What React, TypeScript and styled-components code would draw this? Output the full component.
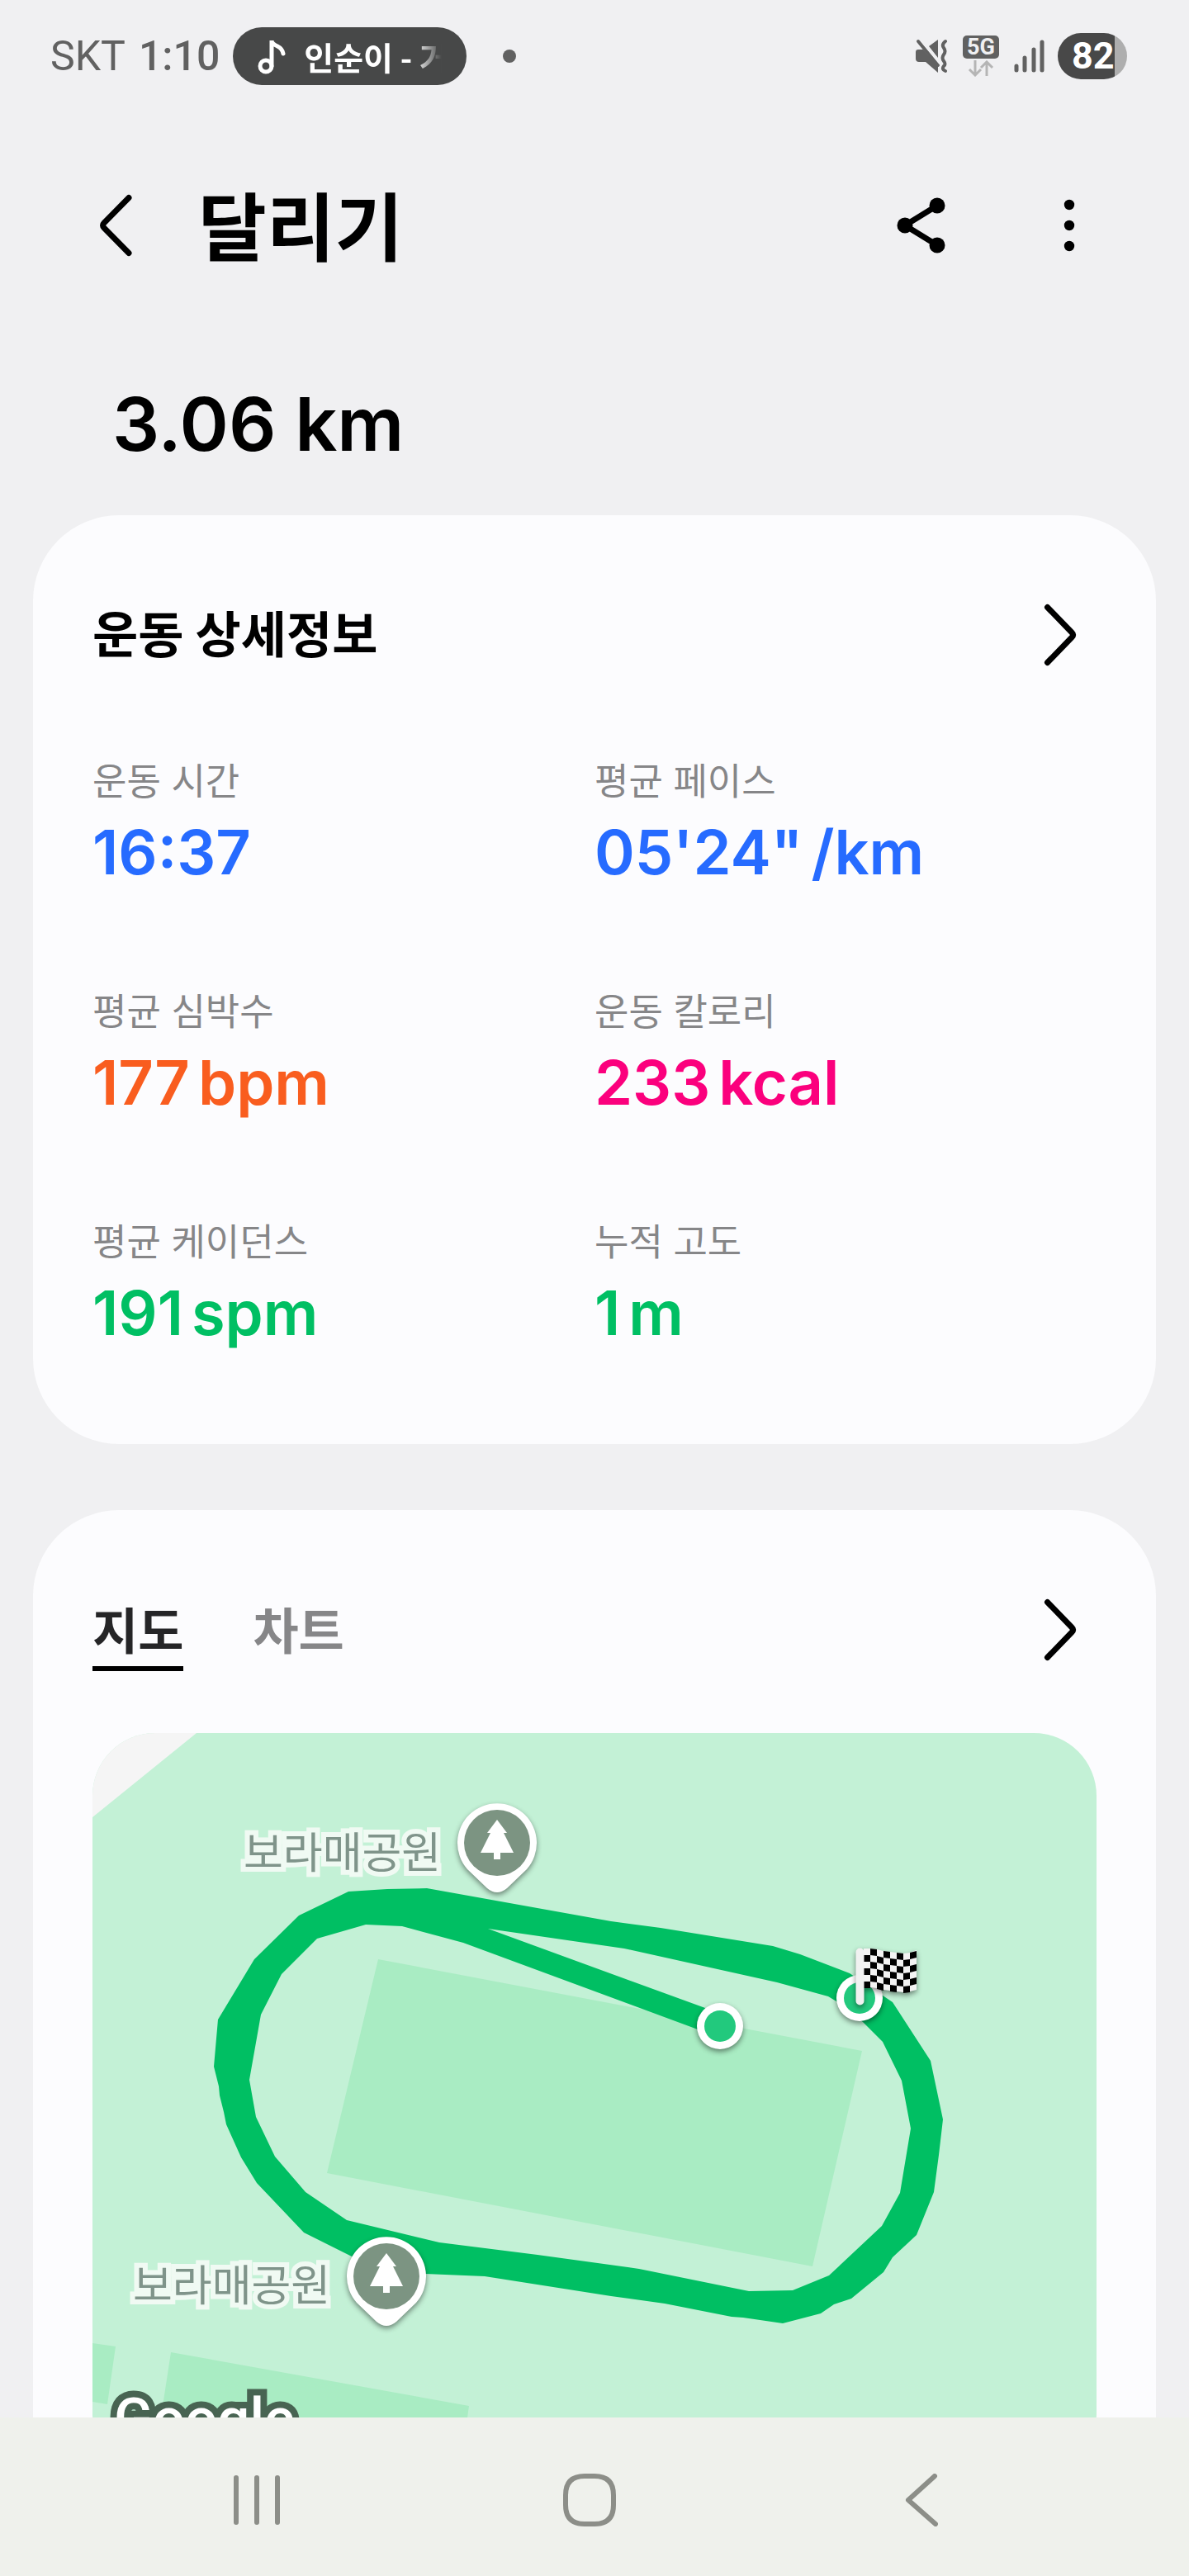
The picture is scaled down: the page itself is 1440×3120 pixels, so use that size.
import React, { useState } from 'react'
import styled, { createGlobalStyle } from 'styled-components'

const GlobalStyle = createGlobalStyle`
  * {
    box-sizing: border-box;
  }

  body {
    margin: 0;
    background: #f0f0f2;
    color: #000;
    font-family: Inter, 'Noto Sans CJK KR', sans-serif;
  }

  button {
    padding: 0;
    border: 0;
    background: none;
    color: inherit;
    font: inherit;
    cursor: pointer;
  }

  h1,
  h2,
  p,
  dl,
  dd {
    margin: 0;
  }

  svg {
    display: block;
  }
`

const Screen = styled.div`
  display: flex;
  flex-direction: column;
  height: 100vh;
`

const StatusBar = styled.div`
  display: flex;
  flex: none;
  align-items: center;
  justify-content: space-between;
  height: 136px;
  padding: 0 75px 0 61px;
  color: #616161;
  font-family: Roboto, 'Noto Sans CJK KR', sans-serif;
`

const StatusGroup = styled.div<{ $gap: number }>`
  display: flex;
  align-items: center;
  gap: ${(props) => props.$gap}px;
`

const StatusText = styled.span<{ $weight: number }>`
  font-size: 50px;
  font-weight: ${(props) => props.$weight};
  line-height: 60px;
`

const MusicChip = styled.div`
  display: flex;
  align-items: center;
  gap: 22px;
  width: 283px;
  height: 70px;
  padding: 0 30px;
  border-radius: 35px;
  background: #474848;
  color: #fff;
`

const MusicTitle = styled.span`
  flex: 1;
  overflow: hidden;
  font-family: 'Noto Sans CJK KR', sans-serif;
  font-size: 39px;
  font-weight: 700;
  line-height: 60px;
  white-space: nowrap;
  mask-image: linear-gradient(to right, #000 80%, transparent);
`

const Dot = styled.span`
  width: 16px;
  height: 16px;
  margin-left: 28px;
  border-radius: 50%;
  background: #616161;
`

const Network = styled.div`
  display: flex;
  flex-direction: column;
  align-items: center;
  gap: 2px;
`

const NetworkBadge = styled.span`
  padding: 0 5px;
  border-radius: 5px;
  background: #616161;
  color: #f0f0f2;
  font-size: 27px;
  font-weight: 700;
  line-height: 28px;
`

const Battery = styled.span`
  width: 84px;
  height: 56px;
  padding-left: 17px;
  border-radius: 28px;
  background: linear-gradient(to right, #484848 82%, #aeaeae 82%);
  color: #fff;
  font-size: 45px;
  font-weight: 700;
  line-height: 56px;
`

const AppBar = styled.header`
  display: flex;
  flex: none;
  align-items: center;
  gap: 83px;
  height: 274px;
  padding: 0 97px 0 92px;
`

const TitleGroup = styled.div`
  display: flex;
  flex: 1;
  align-items: center;
  gap: 52px;
`

const Title = styled.h1`
  padding-top: 8px;
  font-size: 90px;
  font-weight: 700;
  line-height: 120px;
`

const IconButton = styled.button<{ $width?: number }>`
  display: grid;
  place-items: center;
  width: ${(props) => props.$width || 96}px;
  height: 96px;
`

const Content = styled.main`
  flex: 1;
  min-height: 0;
  overflow: hidden;
`

const Distance = styled.p`
  padding: 50px 136px 56px;
  font-size: 90px;
  font-weight: 600;
  line-height: 108px;
`

const Card = styled.section<{ $bottom: number }>`
  margin: 0 40px 80px;
  padding: 90px 72px ${(props) => props.$bottom}px;
  border-radius: 104px;
  background: #fcfcfe;
`

const CardHeader = styled.div<{ $gap: number }>`
  display: flex;
  align-items: center;
  justify-content: space-between;
  height: 110px;
  margin-bottom: ${(props) => props.$gap}px;
`

const CardTitle = styled.h2`
  font-size: 60px;
  font-weight: 700;
  line-height: 88px;
`

const Metrics = styled.dl`
  display: grid;
  grid-template-columns: 1fr 1fr;
  row-gap: 109px;
`

const MetricLabel = styled.dt`
  color: #868688;
  font-size: 45px;
  line-height: 60px;
`

const MetricValue = styled.dd<{ $color: string }>`
  display: flex;
  gap: 10px;
  color: ${(props) => props.$color};
  font-size: 74px;
  font-weight: 600;
  line-height: 110px;
`

const Tabs = styled.div`
  display: flex;
  gap: 84px;
`

const Tab = styled.button<{ $active: boolean }>`
  padding-top: 10px;
  border-bottom: 6px solid ${(props) => (props.$active ? '#000' : 'transparent')};
  color: ${(props) => (props.$active ? '#252527' : '#868688')};
  font-size: 60px;
  font-weight: 700;
  line-height: 84px;
`

const MapSvg = styled.svg`
  width: 100%;
  border-radius: 76px;
  font-family: Roboto, 'Noto Sans CJK KR', sans-serif;
`

const MapLabel = styled.text`
  fill: #7f948a;
  stroke: #f0faf3;
  stroke-width: 12px;
  paint-order: stroke;
  font-family: 'Noto Sans CJK KR', sans-serif;
  font-size: 52px;
`

const Watermark = styled.text`
  fill: #fff;
  stroke: #486452;
  stroke-width: 16px;
  paint-order: stroke;
  font-size: 69px;
  font-weight: 500;
`

const Shadowed = styled.g`
  filter: drop-shadow(0 3px 3px rgba(0, 0, 0, 0.45));
`

const NavBar = styled.nav`
  display: flex;
  flex: none;
  align-items: center;
  justify-content: space-between;
  height: 192px;
  padding: 8px 276px 0 263px;
  background: #eff1ec;
  color: #8c8e88;
`

const metrics = [
  { label: '운동 시간', value: '16:37', unit: '', color: '#266bff' },
  { label: '평균 페이스', value: '05\'24"', unit: '/km', color: '#266bff' },
  { label: '평균 심박수', value: '177', unit: 'bpm', color: '#f95d1f' },
  { label: '운동 칼로리', value: '233', unit: 'kcal', color: '#fb007d' },
  { label: '평균 케이던스', value: '191', unit: 'spm', color: '#00bf63' },
  { label: '누적 고도', value: '1', unit: 'm', color: '#00bf63' },
]

const parks = [
  { x: 490, y: 133, labelX: 183, labelY: 164 },
  { x: 356, y: 658, labelX: 49, labelY: 688 },
]

type ChevronProps = { left?: boolean; color?: string }
const Chevron = ({ left, color = '#000' }: ChevronProps) => (
  <svg width="40" height="76" viewBox="0 0 40 76" fill="none" stroke={color} strokeWidth="7" strokeLinecap="round">
    {left ? <path d="M36 4.500L6 35q-3 3 0 6L36 71.500" /> : <path d="M4.500 4.500L34 35q3 3 0 6L4.500 71.500" />}
  </svg>
)

const MuteIcon = () => (
  <svg width="40" height="42" viewBox="0 0 40 42" fill="none" strokeLinecap="round">
    <path d="M1 16q0-3 3-3h6L28 33v8L13 28H5q-4 0-4-4z" fill="#616161" />
    <path d="M17 9L28 1v22z" fill="#616161" />
    <path d="M4 3L28 32" stroke="#616161" strokeWidth="4" />
    <path d="M9 3L30 29" stroke="#f0f0f2" strokeWidth="3" />
    <path d="M37 3q-5 4-2 8t0 8q-3 4 0 8t0 6q-3 4 2 6" stroke="#616161" strokeWidth="4" />
  </svg>
)

// small wave along the top of the finish flag, one entry per column edge
const flagWave = [0, 0, 1, 3, 4, 5, 6, 5, 3]
const FinishFlag = () => {
  const cells = []
  for (let col = 0; col < 8; col++) {
    for (let row = 0; row < 6; row++) {
      if ((col + row) % 2 === 0) continue
      const x = 934 + col * 8
      const y = 261 + row * 8
      cells.push(
        <path
          key={`${col}-${row}`}
          d={`M${x} ${y + flagWave[col]}L${x + 8} ${y + flagWave[col + 1]}v8L${x} ${y + flagWave[col] + 8}z`}
        />
      )
    }
  }
  return (
    <Shadowed>
      <path d="M934 261h8l8 1 8 2 8 1 8 1 8 1 8-1 8-3v48l-8 2-8 1-8-1-8-1-8-1-8-2-8-1h-8z" fill="#f3f3f3" />
      {cells}
      <path d="M929.500 265.500v59" stroke="#f1f1f1" strokeWidth="10" strokeLinecap="round" />
    </Shadowed>
  )
}

const RouteMap = () => (
  <MapSvg viewBox="0 0 1216 900" role="img" aria-label="지도">
    <path d="M0 0h1216v900H0z" fill="#c3f1d6" />
    <path d="M0 0h126L0 102z" fill="#f5f5f5" />
    <path d="M346 274L932 385 872 646 284 533zM0 739l28 4-10 70-18-3zM95 750l361 65-12 85H72z" fill="#a9ecc3" />
    <path
      fill="#00bf63"
      fillRule="evenodd"
      d="M152 347L196 274 250 221 310 192 357 189 405 188 628 228 688 236 824 258 857 268 917 291 969 326 1015 397
        1030 468 1025 511 1019 556 998 608 969 635 958 653 919 685 898 692 882 703 836 715 788 708 774 707 693 691
        628 682 475 658 403 655 314 634 256 605 199 545 180 514 162 474 159 459 154 439 153 428 147 404z
        M204 341L190 420 198 465 221 513 258 556 308 590 420 617 539 632 662 649 795 676 848 675 892 657 956 597
        978 557 991 479 980 421 957 374 933 350 901 325 891 319 829 302 644 261 479 237 742 333 733 359 449 254
        375 234 331 232 272 249 229 292z"
    />
    <Shadowed>
      <circle cx="760" cy="355" r="28" fill="#fff" />
    </Shadowed>
    <circle cx="760" cy="355" r="19" fill="#22c97d" />
    <Shadowed>
      <circle cx="929" cy="321" r="28" fill="#fff" />
    </Shadowed>
    <circle cx="929" cy="321" r="19" fill="#22c97d" />
    <FinishFlag />
    {parks.map((park) => (
      <g key={park.y}>
        <MapLabel x={park.labelX} y={park.labelY}>
          보라매공원
        </MapLabel>
        <g transform={`translate(${park.x} ${park.y})`}>
          <Shadowed>
            <path d="M-36 32A48 48 0 1 1 36 32L12 55Q0 65-12 55z" fill="#fff" />
          </Shadowed>
          <circle r="40" fill="#7c9482" />
          <path d="M0-28L12-12H8L20 12H4V20H-4V12H-20L-8-12H-12z" fill="#fff" />
        </g>
      </g>
    ))}
    <Watermark x="26" y="854">
      Google
    </Watermark>
  </MapSvg>
)

const App = () => {
  const [tab, setTab] = useState('지도')

  return (
    <Screen>
      <GlobalStyle />
      <StatusBar>
        <StatusGroup $gap={16}>
          <StatusText $weight={400}>SKT</StatusText>
          <StatusText $weight={500}>1:10</StatusText>
          <MusicChip>
            <svg width="34" height="44" viewBox="0 0 34 44" fill="none" stroke="#fff" strokeWidth="5">
              <circle cx="10" cy="34" r="7" />
              <path d="M17 34V3q0 4 7 7 6 3 7 9" strokeLinecap="round" />
            </svg>
            <MusicTitle>인순이 - 거위의 꿈</MusicTitle>
          </MusicChip>
          <Dot />
        </StatusGroup>
        <StatusGroup $gap={15}>
          <StatusGroup $gap={18}>
            <MuteIcon />
            <Network>
              <NetworkBadge>5G</NetworkBadge>
              <svg width="32" height="20" viewBox="0 0 32 20" fill="none" stroke="#b5b5b5" strokeWidth="3">
                <path d="M9 0v17M2 11l7 7 7-7M23 19V2M16 9l7-7 7 7" />
              </svg>
            </Network>
            <svg width="38" height="40" viewBox="0 0 38 40" stroke="#616161" strokeWidth="5" strokeLinecap="round">
              <path d="M3 32v5M13 22v15M24 12v25M34 3v34" />
            </svg>
          </StatusGroup>
          <Battery>82</Battery>
        </StatusGroup>
      </StatusBar>
      <AppBar>
        <TitleGroup>
          <IconButton aria-label="뒤로">
            <Chevron left />
          </IconButton>
          <Title>달리기</Title>
        </TitleGroup>
        <IconButton aria-label="공유">
          <svg width="60" height="68" viewBox="0 0 60 68" stroke="#000" strokeWidth="7">
            <path d="M49 10L10 34l39 24" fill="none" />
            <g stroke="none">
              <circle cx="49" cy="10" r="9.500" />
              <circle cx="10" cy="34" r="9.500" />
              <circle cx="49" cy="58" r="9.500" />
            </g>
          </svg>
        </IconButton>
        <IconButton aria-label="더보기">
          <svg width="14" height="64" viewBox="0 0 14 64">
            <circle cx="7" cy="7" r="6.200" />
            <circle cx="7" cy="32" r="6.200" />
            <circle cx="7" cy="57" r="6.200" />
          </svg>
        </IconButton>
      </AppBar>
      <Content>
        <Distance>3.06 km</Distance>
        <Card $bottom={104}>
          <CardHeader $gap={93}>
            <CardTitle>운동 상세정보</CardTitle>
            <IconButton $width={88} aria-label="운동 상세정보 보기">
              <Chevron />
            </IconButton>
          </CardHeader>
          <Metrics>
            {metrics.map((metric) => (
              <div key={metric.label}>
                <MetricLabel>{metric.label}</MetricLabel>
                <MetricValue $color={metric.color}>
                  <span>{metric.value}</span>
                  {metric.unit && <span>{metric.unit}</span>}
                </MetricValue>
              </div>
            ))}
          </Metrics>
        </Card>
        <Card $bottom={72}>
          <CardHeader $gap={70}>
            <Tabs role="tablist">
              {['지도', '차트'].map((name) => (
                <Tab key={name} role="tab" aria-selected={tab === name} $active={tab === name} onClick={() => setTab(name)}>
                  {name}
                </Tab>
              ))}
            </Tabs>
            <IconButton $width={88} aria-label="지도 크게 보기">
              <Chevron />
            </IconButton>
          </CardHeader>
          <RouteMap />
        </Card>
      </Content>
      <NavBar>
        <IconButton aria-label="최근 앱">
          <svg width="58" height="62" viewBox="0 0 58 62" stroke="currentColor" strokeWidth="6" strokeLinecap="round">
            <path d="M4 4v54M29 4v54M54 4v54" />
          </svg>
        </IconButton>
        <IconButton aria-label="홈">
          <svg width="64" height="64" viewBox="0 0 64 64" fill="none" stroke="currentColor" strokeWidth="6">
            <path d="M26 3h12q23 0 23 23v12q0 23-23 23H26Q3 61 3 38V26Q3 3 26 3z" />
          </svg>
        </IconButton>
        <IconButton aria-label="뒤로 가기">
          <svg width="40" height="64" viewBox="0 0 40 64" fill="none" stroke="currentColor" strokeWidth="6">
            <path d="M36 3L4 32l33 29" strokeLinecap="round" strokeLinejoin="round" />
          </svg>
        </IconButton>
      </NavBar>
    </Screen>
  )
}

export default App
